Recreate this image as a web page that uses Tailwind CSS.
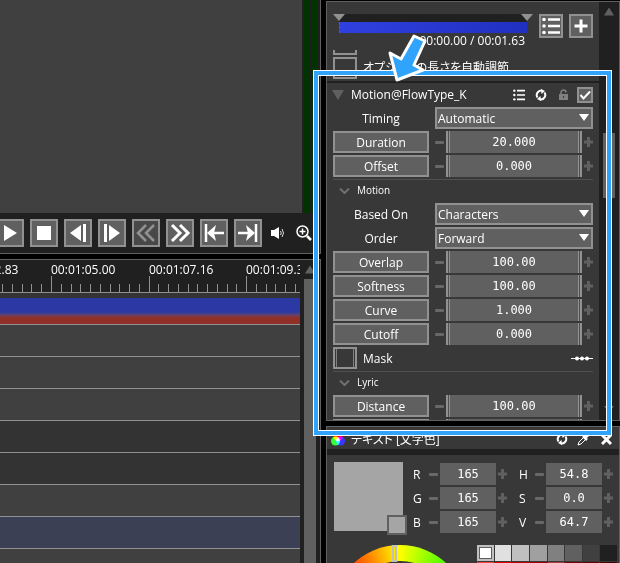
<!DOCTYPE html>
<html lang="ja">
<head>
    <meta charset="UTF-8">
    <meta name="viewport" content="width=device-width, initial-scale=1.0">
    <title>Motion Editor</title>
    <script src="https://cdn.jsdelivr.net/npm/@tailwindcss/browser@4"></script>
</head>
<body class="relative flex h-screen gap-[5px] overflow-hidden bg-black font-['Open_Sans','Noto_Sans_CJK_JP',sans-serif] text-xs text-white">
    <!-- Shared icons -->
    <svg class="hidden">
        <symbol id="minus" viewBox="0 0 9 9"><rect y="3" width="9" height="3" rx="1" fill="#686868"/></symbol>
        <symbol id="plus" viewBox="0 0 9 10"><path d="M4.500 0v10M0 5h9" stroke="#606060" stroke-width="3"/></symbol>
        <symbol id="refresh" viewBox="0 0 12 12"><path d="M2.500 8.500A4.500 4.500 0 0 1 7 1.600M9.500 3.500A4.500 4.500 0 0 1 5 10.400" fill="none" stroke="#fff" stroke-width="2"/><path d="M6 0l4 2-3.500 3zM6 12l-4-2 3.500-3z" fill="#fff"/></symbol>
        <symbol id="list" viewBox="0 0 18 18"><path d="M6 2.500h12M6 9h12M6 15.500h12" stroke="#fff" stroke-width="2.500"/><g fill="#fff"><circle cx="2" cy="2.500" r="1.800"/><circle cx="2" cy="9" r="1.800"/><circle cx="2" cy="15.500" r="1.800"/></g></symbol>
        <symbol id="down" viewBox="0 0 10 7"><path d="M0 0h10L5 7z"/></symbol>
        <symbol id="up" viewBox="0 0 10 8"><path d="M0 8h10L5 0z"/></symbol>
        <symbol id="chevron" viewBox="0 0 11 6"><path d="M1 0.500L5.500 5L10 0.500" fill="none" stroke="#707070" stroke-width="2"/></symbol>
    </svg>

    <!-- Preview and timeline -->
    <main class="flex min-w-0 flex-1 flex-col gap-[5px]">
        <section class="shrink-0 border-r border-b border-[#606060] bg-[#202020]">
            <div class="flex h-[213px] gap-[2px] pr-[3px]">
                <div class="flex-1 bg-[#404040]"></div>
                <div class="flex w-[13px] gap-px">
                    <div class="flex-1 bg-[#003300]"></div>
                    <div class="flex-1 bg-[#003300]"></div>
                </div>
            </div>
            <div class="-ml-1 flex h-10 items-center gap-[6px]">
                <button aria-label="Play" class="size-7 shrink-0 border-2 border-[#919191] bg-[#606060]"><svg viewBox="0 0 24 24" fill="#fff"><path d="M6 4l13 8-13 8z"/></svg></button>
                <button aria-label="Stop" class="size-7 shrink-0 border-2 border-[#919191] bg-[#606060]"><svg viewBox="0 0 24 24" fill="#fff"><path d="M5 5h14v14H5z"/></svg></button>
                <button aria-label="Previous frame" class="size-7 shrink-0 border-2 border-[#919191] bg-[#606060]"><svg viewBox="0 0 24 24" fill="#fff"><path d="M4 12l11-8v16zM17 3h3v18h-3z"/></svg></button>
                <button aria-label="Next frame" class="size-7 shrink-0 border-2 border-[#919191] bg-[#606060]"><svg viewBox="0 0 24 24" fill="#fff"><path d="M20 12L9 4v16zM4 3h3v18H4z"/></svg></button>
                <button aria-label="Previous marker" class="size-7 shrink-0 border-2 border-[#919191] bg-[#484848]"><svg viewBox="0 0 24 24" fill="none" stroke="#919191" stroke-width="2.500"><path d="M12 4l-8 8 8 8M20 4l-8 8 8 8"/></svg></button>
                <button aria-label="Next marker" class="size-7 shrink-0 border-2 border-[#919191] bg-[#606060]"><svg viewBox="0 0 24 24" fill="none" stroke="#fff" stroke-width="3"><path d="M4 4l8 8-8 8M12 4l8 8-8 8"/></svg></button>
                <button aria-label="Go to start" class="size-7 shrink-0 border-2 border-[#919191] bg-[#606060]"><svg viewBox="0 0 24 24"><path d="M4 3v18M8 12h14" stroke="#fff" stroke-width="2.500"/><path d="M5 12l9-8-2 8 2 8z" fill="#fff"/></svg></button>
                <button aria-label="Go to end" class="size-7 shrink-0 border-2 border-[#919191] bg-[#606060]"><svg viewBox="0 0 24 24"><path d="M20 3v18M16 12H2" stroke="#fff" stroke-width="2.500"/><path d="M19 12l-9-8 2 8-2 8z" fill="#fff"/></svg></button>
                <button aria-label="Volume" class="ml-[2px] w-4 shrink-0"><svg viewBox="0 0 16 14"><path d="M1 4h3v6H1zM4 4l5-3v12l-5-3z" fill="#fff"/><path d="M10.500 5q1.500 2 0 4M12 3q3 4 0 8" fill="none" stroke="#ddd"/></svg></button>
                <button aria-label="Zoom" class="ml-1 w-4 shrink-0"><svg viewBox="0 0 16 16" fill="none" stroke="#fff"><circle cx="6.500" cy="6.500" r="5.500" stroke-width="1.500"/><path d="M6.500 3.500v6M3.500 6.500h6" stroke-width="1.500"/><path d="M11 11l4 4" stroke-width="2.500"/></svg></button>
            </div>
        </section>

        <section class="flex min-h-0 flex-1 border-t border-r border-[#606060] bg-[#202020]">
            <div class="min-w-0 flex-1 overflow-hidden">
                <div class="h-[33px] overflow-hidden border-b border-[#919191]">
                    <div class="-ml-[46px] flex h-4 leading-5">
                        <span class="w-[97px] shrink-0">00:01:02.83</span>
                        <span class="w-[98px] shrink-0">00:01:05.00</span>
                        <span class="w-[97px] shrink-0">00:01:07.16</span>
                        <span class="w-[98px] shrink-0">00:01:09.33</span>
                    </div>
                    <svg id="ticks" class="h-4 w-full" stroke="#919191" shape-rendering="crispEdges"></svg>
                </div>
                <div class="h-[5px] bg-[#333333]"></div>
                <div class="h-[27px] border-b border-[#919191] bg-linear-to-b from-[#2c38a4] from-55% to-[#903028] to-75%"></div>
                <div class="h-8 border-b border-[#919191] bg-[#404040]"></div>
                <div class="h-8 border-b border-[#919191] bg-[#404040]"></div>
                <div class="h-8 border-b border-[#919191] bg-[#404040]"></div>
                <div class="h-8 border-b border-[#919191] bg-[#333333]"></div>
                <div class="h-8 border-b border-[#919191] bg-[#333333]"></div>
                <div class="h-8 border-b border-[#919191] bg-[#404040]"></div>
                <div class="h-8 border-b border-[#919191] bg-[#3c4054]"></div>
                <div class="h-8 border-b border-[#919191] bg-[#404040]"></div>
            </div>
            <div class="flex w-5 flex-col items-center pt-[5px]">
                <svg class="mb-[5px] h-[9px] w-[10px] shrink-0" fill="#606060"><use href="#up"/></svg>
                <div class="w-3 flex-1 bg-[#606060]"></div>
            </div>
        </section>
    </main>

    <!-- Inspector -->
    <aside class="flex w-[294px] shrink-0 flex-col gap-[5px] pt-px">
        <section class="flex h-[420px] shrink-0 border border-[#606060] bg-[#383838]">
            <div class="min-w-0 flex-1 overflow-hidden">
                <div class="flex h-12 pt-3 pr-[6px] pl-[6px]">
                    <div class="min-w-0 flex-1">
                        <div class="relative mr-3 ml-[6px]">
                            <div class="h-2 bg-[#202020]"></div>
                            <div class="h-[11px] border-l border-dashed border-[#e03030] bg-linear-to-r from-[#3040e0] to-[#2030c0]"></div>
                            <svg class="absolute top-0 -left-[6px] h-[7px] w-3" viewBox="0 0 12 7" fill="#919191"><path d="M0 0h12L6 7z"/></svg>
                            <svg class="absolute top-0 -right-[6px] h-[7px] w-3" viewBox="0 0 12 7" fill="#919191"><path d="M0 0h12L6 7z"/></svg>
                            <p class="pr-[2px] text-right leading-4 whitespace-nowrap">00:00.00 / 00:01.63</p>
                        </div>
                    </div>
                    <button aria-label="Effect list" class="mr-[6px] size-6 border-2 border-[#919191] bg-[#606060] p-px"><svg class="size-[18px]"><use href="#list"/></svg></button>
                    <button aria-label="Add effect" class="size-6 border-2 border-[#919191] bg-[#606060]"><svg class="size-5" viewBox="0 0 20 20" stroke="#fff" stroke-width="3"><path d="M10 3.500v13M3.500 10h13"/></svg></button>
                </div>
                <div class="ml-[6px] h-[5px] w-6 border-2 border-t-0 border-[#919191]"></div>
                <div class="flex h-[26px] items-center pl-[6px]">
                    <input id="autofit" type="checkbox" class="mr-[6px] h-[22px] w-6 shrink-0 appearance-none border-2 border-[#919191]">
                    <label for="autofit" class="text-xs whitespace-nowrap [font-feature-settings:'palt']">オプションの長さを自動調節</label>
                </div>

                <div class="flex h-[26px] items-center border-t-2 border-[#202020] pr-[6px] pl-[5px]">
                    <svg class="mr-[7px] h-[10px] w-3 shrink-0" viewBox="0 0 12 10" fill="#606060"><path d="M0 0h12L6 10z"/></svg>
                    <h2 class="flex-1 whitespace-nowrap">Motion@FlowType_K</h2>
                    <button aria-label="Parameters" class="mr-[10px]"><svg class="size-3"><use href="#list"/></svg></button>
                    <button aria-label="Reset" class="mr-3"><svg class="size-3"><use href="#refresh"/></svg></button>
                    <button aria-label="Lock" class="mr-[9px]"><svg class="h-3 w-[9px]" viewBox="0 0 9 12"><path d="M2 6V3.500a2.500 2.500 0 0 1 5 0" fill="none" stroke="#808080" stroke-width="1.500"/><path d="M0 5h9v6H0z" fill="#808080"/><path d="M4 7h1v2H4z" fill="#383838"/></svg></button>
                    <div class="relative size-4">
                        <input type="checkbox" checked aria-label="Enabled" class="block size-4 appearance-none border-2 border-[#919191] bg-[#606060]">
                        <svg class="pointer-events-none absolute inset-0 size-4" fill="none" stroke="#fff" stroke-width="2"><path d="M3.500 8l3 3.500L13 4.500"/></svg>
                    </div>
                </div>

                <div class="flex flex-col gap-[2px] pr-[6px] pl-[6px]">
                    <div class="flex h-[22px] items-center">
                        <label for="timing" class="mr-[6px] w-24 pt-px text-center">Timing</label>
                        <div class="relative flex-1">
                            <select id="timing" class="block h-[22px] w-full appearance-none border-2 border-[#919191] bg-[#606060] px-px pt-[2px] leading-4"><option>Automatic</option></select>
                            <svg class="pointer-events-none absolute top-[7px] right-[4px] h-[7px] w-[10px]" fill="#fff"><use href="#down"/></svg>
                        </div>
                    </div>
                    <div class="flex h-[22px] items-center gap-[2px]">
                        <button class="mr-1 h-[22px] w-24 border-2 border-[#919191] bg-[#606060] pt-[2px] leading-4">Duration</button>
                        <svg class="h-[9px] w-[9px]"><use href="#minus"/></svg>
                        <input aria-label="Duration" value="20.000" class="h-[22px] w-0 min-w-0 flex-1 border-x-2 border-[#919191] bg-[#606060] text-center font-['DejaVu_Sans_Mono',monospace] shadow-[inset_1px_0_#505050,inset_-1px_0_#505050,inset_2px_0_#919191,inset_-2px_0_#919191]">
                        <svg class="h-[10px] w-[9px]"><use href="#plus"/></svg>
                    </div>
                    <div class="flex h-[22px] items-center gap-[2px]">
                        <button class="mr-1 h-[22px] w-24 border-2 border-[#919191] bg-[#606060] pt-[2px] leading-4">Offset</button>
                        <svg class="h-[9px] w-[9px]"><use href="#minus"/></svg>
                        <input aria-label="Offset" value="0.000" class="h-[22px] w-0 min-w-0 flex-1 border-x-2 border-[#919191] bg-[#606060] text-center font-['DejaVu_Sans_Mono',monospace] shadow-[inset_1px_0_#505050,inset_-1px_0_#505050,inset_2px_0_#919191,inset_-2px_0_#919191]">
                        <svg class="h-[10px] w-[9px]"><use href="#plus"/></svg>
                    </div>
                    <div class="flex h-[22px] items-center border-t border-[#505050] pl-[6px]">
                        <svg class="mr-[7px] h-[6px] w-[11px]"><use href="#chevron"/></svg>
                        <h3 class="text-[10px]">Motion</h3>
                    </div>
                    <div class="flex h-[22px] items-center">
                        <label for="based" class="mr-[6px] w-24 pt-px text-center">Based On</label>
                        <div class="relative flex-1">
                            <select id="based" class="block h-[22px] w-full appearance-none border-2 border-[#919191] bg-[#606060] px-px pt-[2px] leading-4"><option>Characters</option></select>
                            <svg class="pointer-events-none absolute top-[7px] right-[4px] h-[7px] w-[10px]" fill="#fff"><use href="#down"/></svg>
                        </div>
                    </div>
                    <div class="flex h-[22px] items-center">
                        <label for="order" class="mr-[6px] w-24 pt-px text-center">Order</label>
                        <div class="relative flex-1">
                            <select id="order" class="block h-[22px] w-full appearance-none border-2 border-[#919191] bg-[#606060] px-px pt-[2px] leading-4"><option>Forward</option></select>
                            <svg class="pointer-events-none absolute top-[7px] right-[4px] h-[7px] w-[10px]" fill="#fff"><use href="#down"/></svg>
                        </div>
                    </div>
                    <div class="flex h-[22px] items-center gap-[2px]">
                        <button class="mr-1 h-[22px] w-24 border-2 border-[#919191] bg-[#606060] pt-[2px] leading-4">Overlap</button>
                        <svg class="h-[9px] w-[9px]"><use href="#minus"/></svg>
                        <input aria-label="Overlap" value="100.00" class="h-[22px] w-0 min-w-0 flex-1 border-x-2 border-[#919191] bg-[#606060] text-center font-['DejaVu_Sans_Mono',monospace] shadow-[inset_1px_0_#505050,inset_-1px_0_#505050,inset_2px_0_#919191,inset_-2px_0_#919191]">
                        <svg class="h-[10px] w-[9px]"><use href="#plus"/></svg>
                    </div>
                    <div class="flex h-[22px] items-center gap-[2px]">
                        <button class="mr-1 h-[22px] w-24 border-2 border-[#919191] bg-[#606060] pt-[2px] leading-4">Softness</button>
                        <svg class="h-[9px] w-[9px]"><use href="#minus"/></svg>
                        <input aria-label="Softness" value="100.00" class="h-[22px] w-0 min-w-0 flex-1 border-x-2 border-[#919191] bg-[#606060] text-center font-['DejaVu_Sans_Mono',monospace] shadow-[inset_1px_0_#505050,inset_-1px_0_#505050,inset_2px_0_#919191,inset_-2px_0_#919191]">
                        <svg class="h-[10px] w-[9px]"><use href="#plus"/></svg>
                    </div>
                    <div class="flex h-[22px] items-center gap-[2px]">
                        <button class="mr-1 h-[22px] w-24 border-2 border-[#919191] bg-[#606060] pt-[2px] leading-4">Curve</button>
                        <svg class="h-[9px] w-[9px]"><use href="#minus"/></svg>
                        <input aria-label="Curve" value="1.000" class="h-[22px] w-0 min-w-0 flex-1 border-x-2 border-[#919191] bg-[#606060] text-center font-['DejaVu_Sans_Mono',monospace] shadow-[inset_1px_0_#505050,inset_-1px_0_#505050,inset_2px_0_#919191,inset_-2px_0_#919191]">
                        <svg class="h-[10px] w-[9px]"><use href="#plus"/></svg>
                    </div>
                    <div class="flex h-[22px] items-center gap-[2px]">
                        <button class="mr-1 h-[22px] w-24 border-2 border-[#919191] bg-[#606060] pt-[2px] leading-4">Cutoff</button>
                        <svg class="h-[9px] w-[9px]"><use href="#minus"/></svg>
                        <input aria-label="Cutoff" value="0.000" class="h-[22px] w-0 min-w-0 flex-1 border-x-2 border-[#919191] bg-[#606060] text-center font-['DejaVu_Sans_Mono',monospace] shadow-[inset_1px_0_#505050,inset_-1px_0_#505050,inset_2px_0_#919191,inset_-2px_0_#919191]">
                        <svg class="h-[10px] w-[9px]"><use href="#plus"/></svg>
                    </div>
                    <div class="flex h-[22px] items-center">
                        <input id="mask" type="checkbox" class="mr-[6px] h-[22px] w-6 appearance-none border-2 border-[#919191] shadow-[inset_1px_0_#383838,inset_-1px_0_#383838,inset_2px_0_#808080,inset_-2px_0_#808080]">
                        <label for="mask" class="flex-1 pt-px">Mask</label>
                        <svg class="h-[5px] w-[22px]" viewBox="0 0 22 5" fill="#fff"><path d="M0 2h22v1H0z"/><circle cx="6" cy="2.500" r="2"/><circle cx="11" cy="2.500" r="2"/><circle cx="16" cy="2.500" r="2"/></svg>
                    </div>
                    <div class="flex h-[22px] items-center border-t border-[#505050] pl-[6px]">
                        <svg class="mr-[7px] h-[6px] w-[11px]"><use href="#chevron"/></svg>
                        <h3 class="text-[10px]">Lyric</h3>
                    </div>
                    <div class="flex h-[22px] items-center gap-[2px]">
                        <button class="mr-1 h-[22px] w-24 border-2 border-[#919191] bg-[#606060] pt-[2px] leading-4">Distance</button>
                        <svg class="h-[9px] w-[9px]"><use href="#minus"/></svg>
                        <input aria-label="Distance" value="100.00" class="h-[22px] w-0 min-w-0 flex-1 border-x-2 border-[#919191] bg-[#606060] text-center font-['DejaVu_Sans_Mono',monospace] shadow-[inset_1px_0_#505050,inset_-1px_0_#505050,inset_2px_0_#919191,inset_-2px_0_#919191]">
                        <svg class="h-[10px] w-[9px]"><use href="#plus"/></svg>
                    </div>
                    <div class="flex h-[22px] gap-[2px] pr-[11px]">
                        <div class="mr-[15px] w-24 border-2 border-[#919191] bg-[#606060]"></div>
                        <div class="flex-1 border-x-2 border-[#919191] bg-[#606060] shadow-[inset_1px_0_#505050,inset_-1px_0_#505050,inset_2px_0_#919191,inset_-2px_0_#919191]"></div>
                    </div>
                </div>
            </div>
            <div class="flex w-5 flex-col items-center bg-[#202020] pt-[5px] pb-[7px]">
                <svg class="h-[9px] w-[10px]" fill="#606060"><use href="#up"/></svg>
                <div class="mt-[117px] h-[65px] w-3 bg-[#606060]"></div>
                <svg class="mt-auto h-[7px] w-[10px]" fill="#606060"><use href="#down"/></svg>
            </div>
        </section>

        <section class="min-h-0 flex-1 overflow-hidden border border-b-0 border-[#606060] bg-[#383838]">
            <div class="flex h-7 items-center border-b-6 border-[#202020] pt-[2px] pr-[7px] pl-1">
                <svg class="mr-[6px] size-[14px] shrink-0" viewBox="0 0 14 14"><circle cx="7" cy="4.500" r="4.500" fill="#f00"/><circle class="mix-blend-screen" cx="4.500" cy="9" r="4.500" fill="#0f0"/><circle class="mix-blend-screen" cx="9.500" cy="9" r="4.500" fill="#00f"/></svg>
                <h2 class="flex-1 pt-[2px] whitespace-nowrap [font-feature-settings:'palt']">テキスト [文字色]</h2>
                <button aria-label="Reset colour" class="mr-[9px]"><svg class="size-3"><use href="#refresh"/></svg></button>
                <button aria-label="Pick colour" class="mr-[11px]"><svg class="size-[13px]" viewBox="0 0 13 13"><path d="M1 12l1-3 5-5 2 2-5 5z" fill="none" stroke="#fff"/><path d="M6 3l4 4M8 5l3-3" stroke="#fff" stroke-width="2.500"/></svg></button>
                <button aria-label="Close"><svg class="size-[11px]" viewBox="0 0 11 11" stroke="#fff" stroke-width="3"><path d="M1 1l9 9M10 1l-9 9"/></svg></button>
            </div>
            <div class="flex pt-[7px] pr-[6px] pl-[7px]">
                <div class="relative size-[69px] shrink-0 bg-[#a5a5a5]">
                    <div class="absolute -right-1 -bottom-1 size-5 border-2 border-[#606060] bg-[#a5a5a5]"></div>
                </div>
                <div class="ml-[10px] grid flex-1 grid-cols-2 gap-x-3 gap-y-[2px] pt-px">
                    <div class="flex h-[22px] items-center gap-[2px]">
                        <label for="r" class="w-[14px] pt-px">R</label>
                        <svg class="size-[9px] shrink-0"><use href="#minus"/></svg>
                        <input id="r" value="165" class="h-[22px] w-0 min-w-0 flex-1 bg-[#606060] text-center font-['DejaVu_Sans_Mono',monospace]">
                        <svg class="h-[10px] w-[9px] shrink-0"><use href="#plus"/></svg>
                    </div>
                    <div class="flex h-[22px] items-center gap-[2px]">
                        <label for="h" class="w-[14px] pt-px">H</label>
                        <svg class="size-[9px] shrink-0"><use href="#minus"/></svg>
                        <input id="h" value="54.8" class="h-[22px] w-0 min-w-0 flex-1 bg-[#606060] text-center font-['DejaVu_Sans_Mono',monospace]">
                        <svg class="h-[10px] w-[9px] shrink-0"><use href="#plus"/></svg>
                    </div>
                    <div class="flex h-[22px] items-center gap-[2px]">
                        <label for="g" class="w-[14px] pt-px">G</label>
                        <svg class="size-[9px] shrink-0"><use href="#minus"/></svg>
                        <input id="g" value="165" class="h-[22px] w-0 min-w-0 flex-1 bg-[#606060] text-center font-['DejaVu_Sans_Mono',monospace]">
                        <svg class="h-[10px] w-[9px] shrink-0"><use href="#plus"/></svg>
                    </div>
                    <div class="flex h-[22px] items-center gap-[2px]">
                        <label for="s" class="w-[14px] pt-px">S</label>
                        <svg class="size-[9px] shrink-0"><use href="#minus"/></svg>
                        <input id="s" value="0.0" class="h-[22px] w-0 min-w-0 flex-1 bg-[#606060] text-center font-['DejaVu_Sans_Mono',monospace]">
                        <svg class="h-[10px] w-[9px] shrink-0"><use href="#plus"/></svg>
                    </div>
                    <div class="flex h-[22px] items-center gap-[2px]">
                        <label for="b" class="w-[14px] pt-px">B</label>
                        <svg class="size-[9px] shrink-0"><use href="#minus"/></svg>
                        <input id="b" value="165" class="h-[22px] w-0 min-w-0 flex-1 bg-[#606060] text-center font-['DejaVu_Sans_Mono',monospace]">
                        <svg class="h-[10px] w-[9px] shrink-0"><use href="#plus"/></svg>
                    </div>
                    <div class="flex h-[22px] items-center gap-[2px]">
                        <label for="v" class="w-[14px] pt-px">V</label>
                        <svg class="size-[9px] shrink-0"><use href="#minus"/></svg>
                        <input id="v" value="64.7" class="h-[22px] w-0 min-w-0 flex-1 bg-[#606060] text-center font-['DejaVu_Sans_Mono',monospace]">
                        <svg class="h-[10px] w-[9px] shrink-0"><use href="#plus"/></svg>
                    </div>
                </div>
            </div>
            <div class="flex items-start justify-between pt-3 pr-[2px] pl-[5px]">
                <!-- Hue ring -->
                <div class="relative size-[136px] rounded-full bg-[conic-gradient(#ff0,#0f0,#0ff,#00f,#f0f,#f00,#ff0)] p-4">
                    <div class="size-[104px] rounded-full bg-[#383838]"></div>
                    <div class="absolute top-0 left-[60px] h-[17px] w-[5px] border-2 border-[#c0c0c0]"></div>
                </div>
                <div class="grid w-[140px] grid-cols-8 gap-px">
                    <div class="h-4 border-2 border-[#c0c0c0] bg-white outline-1 -outline-offset-3 outline-[#606060]"></div>
                    <div class="bg-[#e0e0e0]"></div>
                    <div class="bg-[#c0c0c0]"></div>
                    <div class="bg-[#a0a0a0]"></div>
                    <div class="bg-[#808080]"></div>
                    <div class="bg-[#606060]"></div>
                    <div class="bg-[#404040]"></div>
                    <div class="bg-[#202020]"></div>
                    <div class="h-4 bg-[#ff4040]"></div>
                    <div class="bg-[#e00000]"></div>
                    <div class="bg-[#c00000]"></div>
                    <div class="bg-[#a00000]"></div>
                    <div class="bg-[#a04040]"></div>
                    <div class="bg-[#800000]"></div>
                    <div class="bg-[#600000]"></div>
                    <div class="bg-[#400000]"></div>
                </div>
            </div>
        </section>
    </aside>

    <!-- Callout frame and arrow -->
    <div class="pointer-events-none absolute top-[70px] right-2 h-[366px] w-[299px] border border-white">
        <div class="h-full border-4 border-[#30a4fc]">
            <div class="h-full border border-white"></div>
        </div>
        <svg class="absolute -top-[38px] left-[72px] h-[52px] w-[44px]" viewBox="386 33 44 52"><path d="M414 36L425 41L414 65L423 70L397 80L390 53L401 59Z" fill="#30a4fc" stroke="#fff" stroke-width="3" stroke-linejoin="round"/></svg>
    </div>

    <script>
        const ticks = document.getElementById('ticks');
        const step = 9.76;

        // every tenth tick is a labelled one
        for (let i = -5; i < 60; i++) {
            const x = Math.round(51 + i * step);
            const line = document.createElementNS('http://www.w3.org/2000/svg', 'line');
            line.setAttribute('x1', x);
            line.setAttribute('x2', x);
            line.setAttribute('y1', i % 10 === 0 ? 0 : 8);
            line.setAttribute('y2', 16);
            ticks.appendChild(line);
        }
    </script>
</body>
</html>
